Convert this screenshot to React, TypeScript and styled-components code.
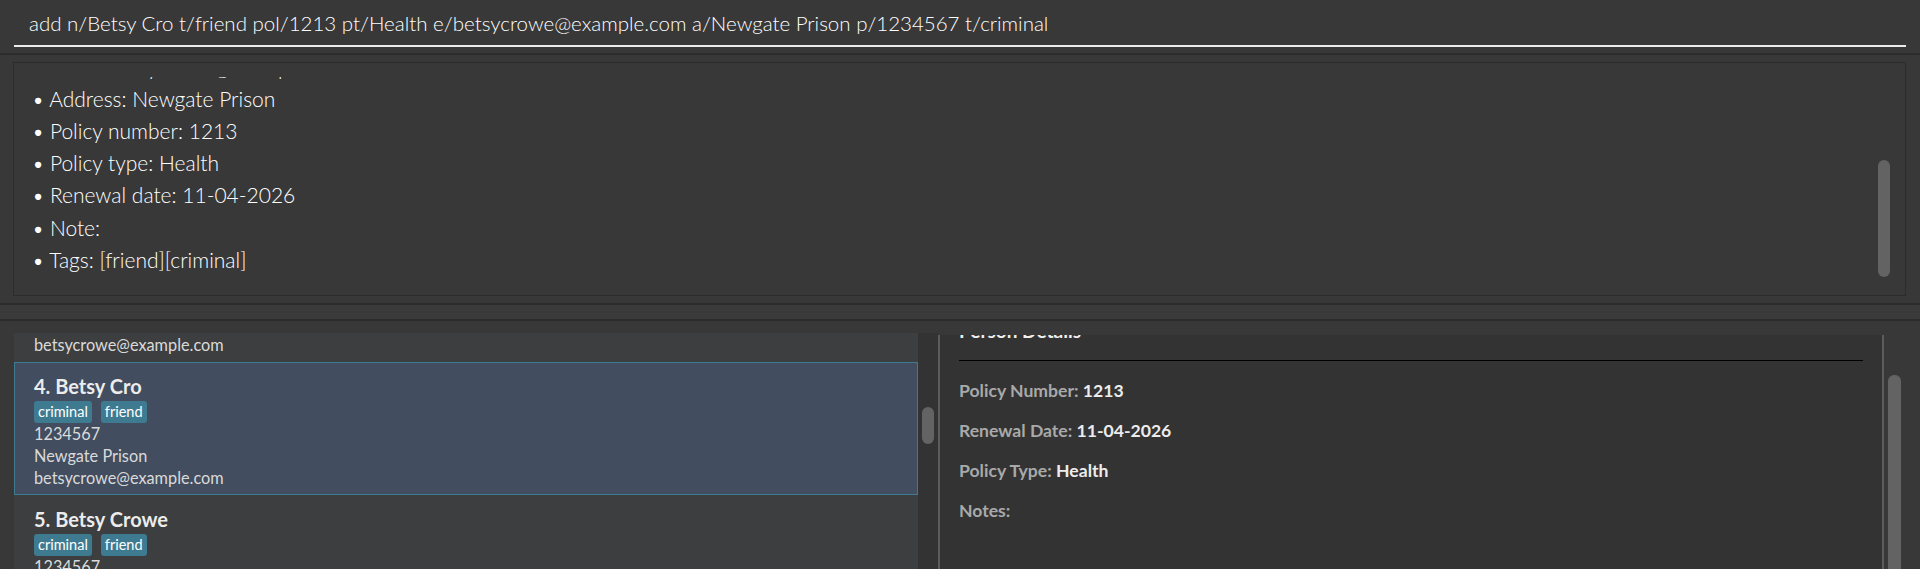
import { useLayoutEffect, useRef } from 'react'
import styled, { createGlobalStyle } from 'styled-components'

const FONT = `Lato, 'Open Sans', 'Liberation Sans', sans-serif`

const GlobalStyle = createGlobalStyle`
  html, body {
    margin: 0;
    padding: 0;
    background: #383838;
    overflow: hidden;
  }
  * {
    box-sizing: border-box;
  }
`

const Window = styled.div`
  display: flex;
  flex-direction: column;
  width: 1920px;
  height: 569px;
  overflow: hidden;
  background: #383838;
  font-family: ${FONT};
`

const CommandBar = styled.div`
  flex-shrink: 0;
  height: 55px;
  padding: 0 14px;
  border-bottom: 2px solid #2b2b2b;
`

const CommandInput = styled.input`
  display: block;
  width: 100%;
  height: 47px;
  padding: 0 14px 0 15px;
  border: none;
  border-bottom: 2px solid #ececec;
  background: transparent;
  color: #ffffff;
  font-family: ${FONT};
  font-size: 20.5px;
  font-weight: 300;
  outline: none;
`

const ResultPane = styled.div`
  flex-shrink: 0;
  height: 250px;
  padding: 7px 14px 7px 13px;
  border-bottom: 2px solid #2b2b2b;
`

const ResultBox = styled.div`
  display: flex;
  height: 100%;
  border: 1px solid #2c2c2c;
  background: #383838;
`

const ResultScroll = styled.div`
  flex: 1;
  margin-top: 14px;
  overflow: hidden;
`

const ResultText = styled.div`
  padding: 0 0 40px 18px;
  color: #ffffff;
  font-size: 21px;
  font-weight: 300;
  line-height: 32.2px;
`

const Track = styled.div<{ $width: number; $before?: number; $after?: number; $bg: string }>`
  position: relative;
  flex-shrink: 0;
  width: ${(p) => p.$width}px;
  margin-left: ${(p) => p.$before ?? 0}px;
  margin-right: ${(p) => p.$after ?? 0}px;
  background: ${(p) => p.$bg};
`

const Thumb = styled.div<{ $left: number; $top: number; $w: number; $h: number }>`
  position: absolute;
  left: ${(p) => p.$left}px;
  top: ${(p) => p.$top}px;
  width: ${(p) => p.$w}px;
  height: ${(p) => p.$h}px;
  border-radius: 6px;
  background: #636363;
`

const Divider = styled.div`
  flex-shrink: 0;
  height: 16px;
  background: #3a3a3a;
  border-bottom: 2px solid #2b2b2b;
`

const LowerSection = styled.div`
  display: flex;
  flex: 1;
  min-height: 0;
`

const ListPanel = styled.div`
  display: flex;
  flex-shrink: 0;
  width: 938px;
  padding: 12px 0 0 14px;
`

const ListViewport = styled.div`
  flex: 1;
  overflow: hidden;
  background: #3c3e3f;
`

const Card = styled.div<{ $selected?: boolean }>`
  padding: 10px 0 5px 19px;
  border: 1px solid ${(p) => (p.$selected ? '#3e7b91' : 'transparent')};
  background: ${(p) => (p.$selected ? '#424d5f' : 'transparent')};
`

const CardName = styled.div`
  color: #ececec;
  font-size: 20px;
  font-weight: 700;
  line-height: 26px;
`

const TagRow = styled.div`
  display: flex;
  gap: 9px;
  height: 22px;
  margin-top: 2px;
`

const Tag = styled.span`
  padding: 1px 4px;
  border-radius: 3px;
  background: #3e7b91;
  color: #ffffff;
  font-size: 14.5px;
  line-height: 20px;
`

const CardLine = styled.div`
  color: #dadada;
  font-size: 16.3px;
  line-height: 22px;
`

const DetailSide = styled.div`
  display: flex;
  flex: 1;
  padding-top: 14px;
`

const DetailPane = styled.div`
  flex-shrink: 0;
  width: 946px;
  border-left: 2px solid #5c5c5c;
  border-right: 2px solid #5c5c5c;
  background: #333333;
  overflow: hidden;
`

const DetailContent = styled.div`
  padding: 10px 19px 200px;
`

const DetailTitle = styled.h2`
  margin: 0;
  color: #f0f0f0;
  font-size: 19px;
  font-weight: 700;
  line-height: 28px;
`

const Rule = styled.div`
  height: 1px;
  margin: 15px 0 10px;
  background: #000000;
`

const DetailRow = styled.div`
  color: #a9a9a9;
  font-size: 17.6px;
  font-weight: 700;
  line-height: 40px;
`

const DetailValue = styled.span`
  color: #ececec;
`

const resultLines = [
  'New person added:',
  '• Name: Betsy Cro',
  '• Phone: 1234567',
  '• Email: betsycrowe@example.com',
  '• Address: Newgate Prison',
  '• Policy number: 1213',
  '• Policy type: Health',
  '• Renewal date: 11-04-2026',
  '• Note:',
  '• Tags: [friend][criminal]',
]

const people = [
  { name: 'Alex Yeoh', tags: ['friends'], phone: '87438807', address: 'Blk 30 Geylang Street 29, #06-40', email: 'alexyeoh@example.com' },
  { name: 'Bernice Yu', tags: ['colleagues', 'friends'], phone: '99272758', address: 'Blk 30 Lorong 3 Serangoon Gardens, #07-18', email: 'berniceyu@example.com' },
  { name: 'Betsy Crowe', tags: ['criminal', 'friend'], phone: '1234567', address: 'Newgate Prison', email: 'betsycrowe@example.com' },
  { name: 'Betsy Cro', tags: ['criminal', 'friend'], phone: '1234567', address: 'Newgate Prison', email: 'betsycrowe@example.com' },
  { name: 'Betsy Crowe', tags: ['criminal', 'friend'], phone: '1234567', address: 'Newgate Prison', email: 'betsycrowe@example.com' },
  { name: 'Charlotte Oliveiro', tags: ['neighbours'], phone: '93210283', address: 'Blk 11 Ang Mo Kio Street 74, #11-04', email: 'charlotte@example.com' },
]

const details = [
  ['Policy Number:', '1213'],
  ['Renewal Date:', '11-04-2026'],
  ['Policy Type:', 'Health'],
  ['Notes:', ''],
]

const App = () => {
  const resultRef = useRef<HTMLDivElement>(null)
  const listRef = useRef<HTMLDivElement>(null)
  const detailRef = useRef<HTMLDivElement>(null)

  useLayoutEffect(() => {
    if (resultRef.current) resultRef.current.scrollTop = 123
    if (listRef.current) listRef.current.scrollTop = 370
    if (detailRef.current) detailRef.current.scrollTop = 28
  }, [])

  return (
    <Window>
      <GlobalStyle />
      <CommandBar>
        <CommandInput
          readOnly
          value='add n/Betsy Cro t/friend pol/1213 pt/Health e/betsycrowe@example.com a/Newgate Prison p/1234567 t/criminal'
        />
      </CommandBar>
      <ResultPane>
        <ResultBox>
          <ResultScroll ref={resultRef}>
            <ResultText>
              {resultLines.map((line, i) => (
                <div key={i}>{line}</div>
              ))}
            </ResultText>
          </ResultScroll>
          <Track $width={12} $after={15} $bg='transparent'>
            <Thumb $left={0} $top={97} $w={12} $h={117} />
          </Track>
        </ResultBox>
      </ResultPane>
      <Divider />
      <LowerSection>
        <ListPanel>
          <ListViewport ref={listRef}>
            {people.map((p, i) => (
              <Card key={i} $selected={i === 3}>
                <CardName>
                  {i + 1}. {p.name}
                </CardName>
                <TagRow>
                  {p.tags.map((t) => (
                    <Tag key={t}>{t}</Tag>
                  ))}
                </TagRow>
                <CardLine>{p.phone}</CardLine>
                <CardLine>{p.address}</CardLine>
                <CardLine>{p.email}</CardLine>
              </Card>
            ))}
          </ListViewport>
          <Track $width={20} $bg='#333333'>
            <Thumb $left={4} $top={74} $w={12} $h={37} />
          </Track>
        </ListPanel>
        <DetailSide>
          <DetailPane ref={detailRef}>
            <DetailContent>
              <DetailTitle>Person Details</DetailTitle>
              <Rule />
              {details.map(([label, value]) => (
                <DetailRow key={label}>
                  {label} <DetailValue>{value}</DetailValue>
                </DetailRow>
              ))}
            </DetailContent>
          </DetailPane>
          <Track $width={13} $before={4} $bg='transparent'>
            <Thumb $left={0} $top={40} $w={13} $h={400} />
          </Track>
        </DetailSide>
      </LowerSection>
    </Window>
  )
}

export default App
